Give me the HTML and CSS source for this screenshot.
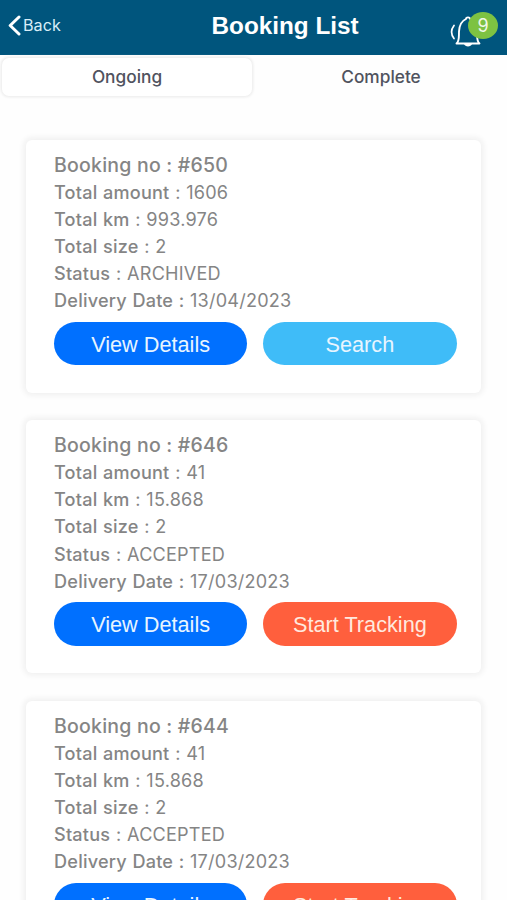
FILE: index.html
```html
<!DOCTYPE html>
<html lang="en">
<head>
<meta charset="utf-8">
<title>Booking List</title>
<link rel="stylesheet" href="styles.css">
</head>
<body>
<header class="bar">
  <a class="back"><svg class="chevron" viewBox="0 0 13 21"><path d="M11 2 2.2 10.5 11 19"/></svg><span>Back</span></a>
  <h1>Booking List</h1>
  <div class="bell">
    <svg viewBox="0 0 48 38"><path d="M6.500 32.500c3-2.500 2.300-6 2.500-12 .3-6.500 2.500-10.500 7-12.500 0-2.200 4-2.200 4 0 4.500 2 6.700 6 7 12.500.2 6-.5 9.500 2.500 12z"/><path class="solid" d="M14 33h8c-1 3.200-7 3.200-8 0z"/><path class="wave" d="M4 14.500c-3 4-3 9 0 13"/></svg>
    <span class="badge">9</span>
  </div>
</header>
<nav class="tabs"><a class="tab active">Ongoing</a><a class="tab">Complete</a></nav>
<main class="list">
  <section class="card">
    <h2>Booking no : #650</h2>
    <p><b>Total amount</b> : 1606</p>
    <p><b>Total km</b> : 993.976</p>
    <p><b>Total size</b> : 2</p>
    <p><b>Status</b> : ARCHIVED</p>
    <p><b>Delivery Date :</b> 13/04/2023</p>
    <div class="actions"><button class="details">View Details</button><button class="search">Search</button></div>
  </section>
  <section class="card">
    <h2>Booking no : #646</h2>
    <p><b>Total amount</b> : 41</p>
    <p><b>Total km</b> : 15.868</p>
    <p><b>Total size</b> : 2</p>
    <p><b>Status</b> : ACCEPTED</p>
    <p><b>Delivery Date :</b> 17/03/2023</p>
    <div class="actions"><button class="details">View Details</button><button class="track">Start Tracking</button></div>
  </section>
  <section class="card">
    <h2>Booking no : #644</h2>
    <p><b>Total amount</b> : 41</p>
    <p><b>Total km</b> : 15.868</p>
    <p><b>Total size</b> : 2</p>
    <p><b>Status</b> : ACCEPTED</p>
    <p><b>Delivery Date :</b> 17/03/2023</p>
    <div class="actions"><button class="details">View Details</button><button class="track">Start Tracking</button></div>
  </section>
</main>
</body>
</html>
```
FILE: styles.css
```css
* { box-sizing: border-box; margin: 0; }
body { height: 900px; overflow: hidden; background: #fefefe; font-family: Inter, "Liberation Sans", sans-serif; }
.bar { height: 55px; background: #00557d; color: #fff; display: grid; grid-template-columns: 203.500px auto 1fr; align-items: center; padding: 0 9px 4px 8px; }
.back { display: flex; align-items: center; gap: 2px; font-size: 16.200px; color: #d9eef8; margin-top: -1px; }
.chevron { width: 13px; height: 21px; fill: none; stroke: #fff; stroke-width: 3; stroke-linecap: round; stroke-linejoin: round; }
h1 { font: bold 24.300px "Liberation Sans", sans-serif; }
.bell { position: relative; justify-self: end; width: 48px; height: 38px; margin-top: 9px; }
.bell svg { display: block; width: 48px; height: 38px; fill: none; stroke: #fff; stroke-width: 1.9; stroke-linejoin: round; stroke-linecap: round; }
.bell .solid { fill: #fff; stroke: none; }
.bell .wave { stroke-width: 1.7; }
.badge { position: absolute; left: 18px; top: 1px; width: 30px; height: 27px; border-radius: 50%; background: #7dc242; font-size: 18px; line-height: 27px; text-align: center; color: #f0f8e8; }
.tabs { display: flex; height: 42px; padding: 3px 1px 1px 2px; gap: 4px; }
.tab { flex: 1; display: flex; align-items: center; justify-content: center; border-radius: 7px; font-size: 17.300px; font-weight: 500; color: #50535e; padding-bottom: 1px; }
.tab.active { background: #fff; box-shadow: 0 0 3px 1px #e9e9e9; }
.list { padding: 42.600px 26px 0; display: flex; flex-direction: column; gap: 27.400px; }
.card { height: 253.200px; flex: none; padding: 12px 24.500px 0 28px; border-radius: 6px; background: #fff; box-shadow: 0 0 6px 2px #eee; color: #858585; }
h2 { font-size: 19.500px; font-weight: 500; line-height: 27.100px; letter-spacing: .22px; }
p { font-size: 18.100px; line-height: 27.100px; letter-spacing: .2px; word-spacing: .4px; }
b { font-weight: 500; letter-spacing: .22px; }
.actions { display: grid; grid-template-columns: 1fr 1fr; gap: 16px; margin-top: 7.700px; }
button { height: 43.500px; border: 0; border-radius: 22px; padding: 2px 0 0; font: 21.700px "Liberation Sans", sans-serif; color: #e8f5ff; }
.details { background: #0070ff; }
.search { background: #3fbcf8; }
.track { background: #ff5f3d; color: #ffe9df; }
```
